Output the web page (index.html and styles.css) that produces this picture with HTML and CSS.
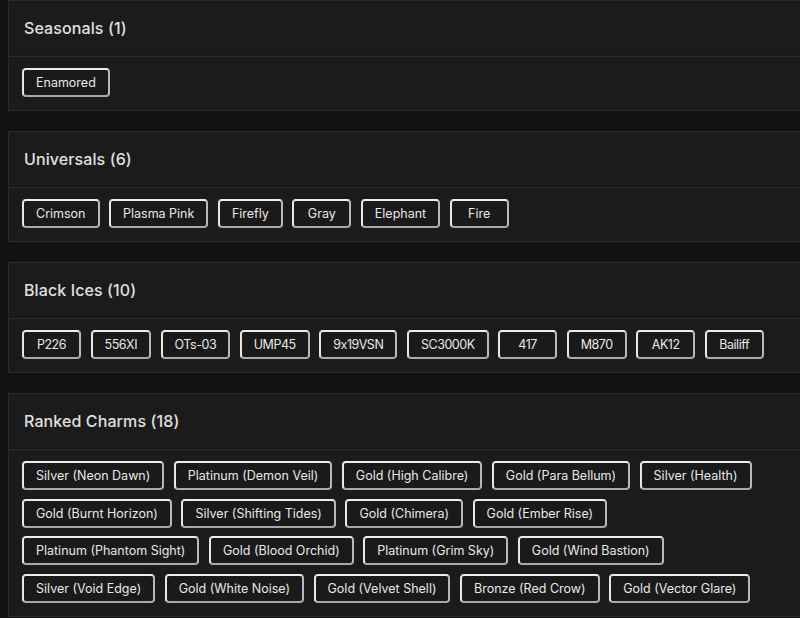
FILE: index.html
```html
<!DOCTYPE html>
<html>
<head>
<meta charset="utf-8">
<link rel="stylesheet" href="styles.css">
</head>
<body>
<div class="page">
  <section class="card">
    <header class="card-head"><h2 class="card-title">Seasonals (1)</h2></header>
    <div class="card-body">
      <button class="tag">Enamored</button>
    </div>
  </section>
  <section class="card">
    <header class="card-head"><h2 class="card-title">Universals (6)</h2></header>
    <div class="card-body">
      <button class="tag">Crimson</button>
      <button class="tag">Plasma Pink</button>
      <button class="tag">Firefly</button>
      <button class="tag">Gray</button>
      <button class="tag">Elephant</button>
      <button class="tag">Fire</button>
    </div>
  </section>
  <section class="card">
    <header class="card-head"><h2 class="card-title">Black Ices (10)</h2></header>
    <div class="card-body card-body--numeric">
      <button class="tag">P226</button>
      <button class="tag">556XI</button>
      <button class="tag">OTs-03</button>
      <button class="tag">UMP45</button>
      <button class="tag">9x19VSN</button>
      <button class="tag">SC3000K</button>
      <button class="tag">417</button>
      <button class="tag">M870</button>
      <button class="tag">AK12</button>
      <button class="tag">Bailiff</button>
    </div>
  </section>
  <section class="card">
    <header class="card-head"><h2 class="card-title">Ranked Charms (18)</h2></header>
    <div class="card-body">
      <button class="tag">Silver (Neon Dawn)</button>
      <button class="tag">Platinum (Demon Veil)</button>
      <button class="tag">Gold (High Calibre)</button>
      <button class="tag">Gold (Para Bellum)</button>
      <button class="tag">Silver (Health)</button>
      <button class="tag">Gold (Burnt Horizon)</button>
      <button class="tag">Silver (Shifting Tides)</button>
      <button class="tag">Gold (Chimera)</button>
      <button class="tag">Gold (Ember Rise)</button>
      <button class="tag">Platinum (Phantom Sight)</button>
      <button class="tag">Gold (Blood Orchid)</button>
      <button class="tag">Platinum (Grim Sky)</button>
      <button class="tag">Gold (Wind Bastion)</button>
      <button class="tag">Silver (Void Edge)</button>
      <button class="tag">Gold (White Noise)</button>
      <button class="tag">Gold (Velvet Shell)</button>
      <button class="tag">Bronze (Red Crow)</button>
      <button class="tag">Gold (Vector Glare)</button>
    </div>
  </section>
</div>
</body>
</html>
```
FILE: styles.css
```css
html, body {
  margin: 0;
  padding: 0;
  background: #121212;
  overflow: hidden;
}
body {
  font-family: "Inter", "Noto Sans", sans-serif;
  color: #e6e6e6;
}
.page {
  display: flex;
  flex-direction: column;
  gap: 20px;
  padding: 0 0 0 8px;
  margin-right: -10px;
}
.card {
  background: #1b1b1b;
  border: 1px solid #2b2b2b;
}
.card-head {
  height: 54px;
  display: flex;
  align-items: center;
  padding: 0 15px;
  border-bottom: 1px solid #161616;
}
.card-title {
  margin: 0;
  font-size: 16px;
  font-weight: 500;
  color: #e0e0e0;
  letter-spacing: 0.1px;
}
.card-body {
  border-top: 1px solid #2c2c2c;
  display: flex;
  flex-wrap: wrap;
  column-gap: 9.5px;
  row-gap: 8.7px;
  padding: 11px 30px 13px 13px;
}
.tag {
  box-sizing: border-box;
  height: 29px;
  min-width: 59px;
  padding: 0 12px;
  background: #1a1a1a;
  color: #e8e8e8;
  font-family: "Inter", "Noto Sans", sans-serif;
  font-size: 12.5px;
  font-weight: 400;
  letter-spacing: 0;
  border: 2px solid;
  border-color: #ededed #b9b9b9 #a9a9a9 #e6e6e6;
  border-radius: 4px;
  display: inline-flex;
  align-items: center;
  justify-content: center;
}
.card-body--numeric .tag {
  letter-spacing: -0.45px;
}
```
